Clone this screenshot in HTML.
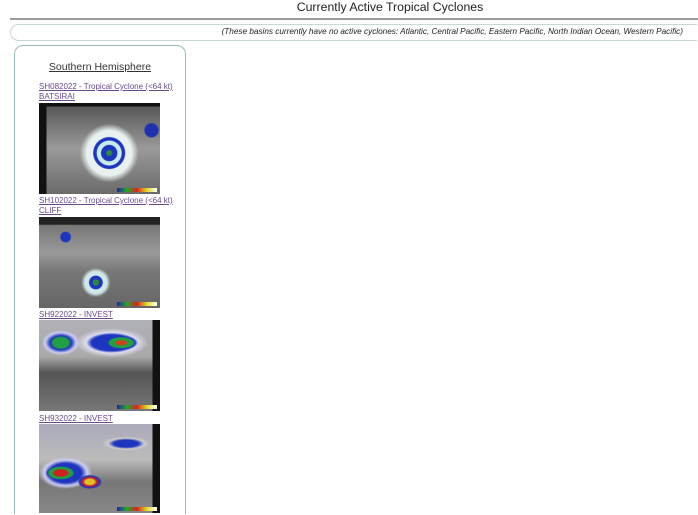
<!DOCTYPE html>
<html><head><style>
html,body{margin:0;width:698px;height:515px;overflow:hidden;background:#fff;font-family:"Liberation Sans",sans-serif;position:relative}
.t{position:absolute;top:0;left:0;width:780px;text-align:center;font-size:12.3px;color:#222;line-height:15px}
.rule{position:absolute;top:18px;left:10px;width:688px;height:2px;background:#9a9a9a}
.bar{position:absolute;top:24px;left:10px;width:686px;height:15px;border:1px solid #c8d6d6;border-right:none;border-radius:9px 0 0 9px}
.bar i{position:absolute;right:14px;top:2px;font-size:8.2px;color:#222}
.panel{position:absolute;top:45px;left:14px;width:170px;height:468px;border:1.5px solid #9bbcbc;border-bottom:none;border-radius:9px 9px 0 0}
.h{position:absolute;top:61px;left:14px;width:172px;text-align:center;font-size:10.5px;color:#333;text-decoration:underline}
a{position:absolute;left:39px;font-size:8px;color:#6a4a8a;text-decoration:underline;line-height:10px}
.img{position:absolute;left:39px;width:121px;height:91px;background:#333}
.s1{background:radial-gradient(circle at 58% 55%,#2a8a3a 0 3%,#1e35c0 4% 9%,#c8ecec 10% 14%,#1e35c0 15% 18%,#e8f0f0 19% 26%,transparent 34%),radial-gradient(circle at 93% 30%,#2030b0 0 5%,transparent 6%),linear-gradient(90deg,#111 0 6%,transparent 6%),linear-gradient(#111 0 4%,#585858 4%,#9a9a9a 50%,#6a6a6a);}
.s2{background:radial-gradient(circle at 47% 72%,#2a8a3a 0 3%,#1e35c0 4% 7%,#d0e8e8 8% 12%,transparent 16%),radial-gradient(circle at 22% 22%,#1e35c0 0 4%,transparent 5%),linear-gradient(#222 0 8%,#777 9%,#9a9a9a 40%,#777 60%,#666);}
.s3{background:radial-gradient(ellipse 14% 8% at 68% 25%,#d04020 0 30%,#20a040 40% 70%,#1e35c0 80%,transparent 100%),radial-gradient(ellipse 30% 16% at 60% 25%,#1e35c0 0 55%,#dde 70%,transparent 100%),radial-gradient(ellipse 16% 14% at 18% 25%,#20a040 0 40%,#1e35c0 55%,#cce 80%,transparent 100%),linear-gradient(90deg,transparent 94%,#111 94%),linear-gradient(#b0b0b8,#aaa 40%,#555 58%,#777);}
.s4{background:radial-gradient(ellipse 12% 8% at 18% 55%,#d02020 0 45%,#20a040 60% 80%,#1e35c0 95%,transparent 100%),radial-gradient(ellipse 10% 8% at 42% 65%,#e0c020 0 40%,#d02020 55%,#1e35c0 85%,transparent 100%),radial-gradient(ellipse 22% 18% at 22% 55%,#1e35c0 0 60%,#cce 80%,transparent 100%),radial-gradient(ellipse 20% 8% at 72% 22%,#1e35c0 0 50%,#ccc 75%,transparent 100%),linear-gradient(90deg,transparent 94%,#111 94%),linear-gradient(#aab,#bbb 40%,#777 65%,#888);}
.img:after{content:"";position:absolute;right:3px;bottom:2px;width:40px;height:4px;background:linear-gradient(90deg,#22a,#2a2,#d22,#dd2,#fff)}
</style></head><body>
<div class="t">Currently Active Tropical Cyclones</div>
<div class="rule"></div>
<div class="bar"><i>(These basins currently have no active cyclones: Atlantic, Central Pacific, Eastern Pacific, North Indian Ocean, Western Pacific)</i></div>
<div class="panel"></div>
<div class="h">Southern Hemisphere</div>
<a style="top:82px">SH082022 - Tropical Cyclone (&lt;64 kt)<br>BATSIRAI</a>
<div class="img s1" style="top:103px"></div>
<a style="top:196px">SH102022 - Tropical Cyclone (&lt;64 kt)<br>CLIFF</a>
<div class="img s2" style="top:217px"></div>
<a style="top:310px">SH922022 - INVEST</a>
<div class="img s3" style="top:320px"></div>
<a style="top:414px">SH932022 - INVEST</a>
<div class="img s4" style="top:424px;height:89px"></div>
</body></html>
